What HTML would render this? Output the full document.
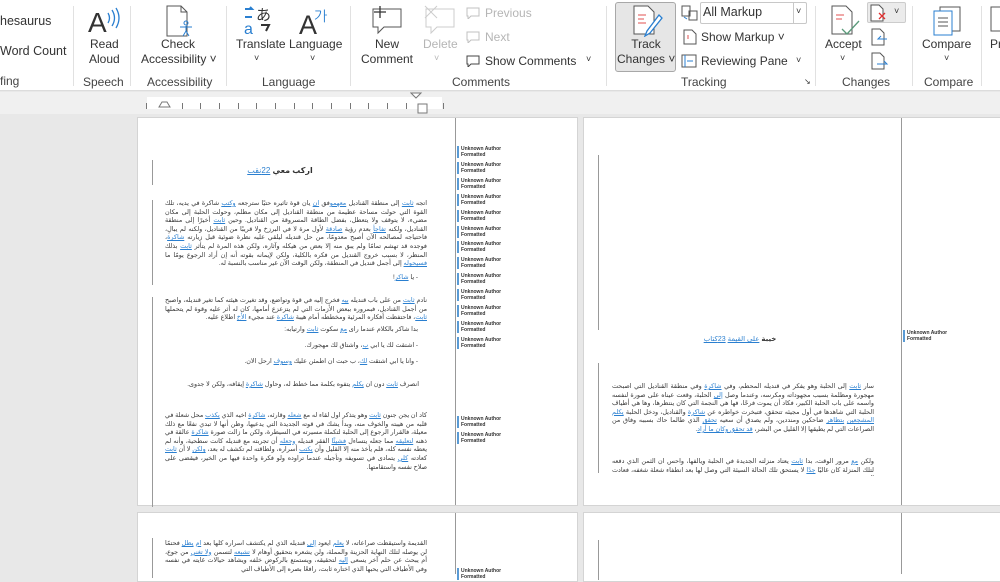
<!DOCTYPE html>
<html><head><meta charset="utf-8"><style>
*{margin:0;padding:0;box-sizing:border-box}
body{width:1000px;height:574px;overflow:hidden;background:#e8e8e8;font-family:"Segoe UI","Liberation Sans",sans-serif;position:relative;color:#333}
.a{position:absolute}
.rib{left:0;top:0;width:1000px;height:91px;background:#fff;border-bottom:1px solid #dcdcdc}
.lbl{position:absolute;font-size:12px;color:#333;white-space:nowrap}
.grp{position:absolute;top:88px;font-size:12px;color:#444}
.sep{position:absolute;top:6px;width:1px;height:80px;background:#e1e1e1}
.dis{color:#b5b5b5}
.page{position:absolute;background:#fff;border:1px solid #d4d4d4}
.ar{position:absolute;direction:rtl;text-align:justify;font-family:"Liberation Sans","DejaVu Sans",sans-serif;font-size:6.4px;line-height:8.6px;color:#3a3a3a;overflow:hidden}
.ar b{color:#2a7fd0;font-weight:normal;text-decoration:underline}
.cm{position:absolute;left:457px;font-size:5px;line-height:6px;font-weight:bold;color:#333;border-left:2px solid #5a9bd5;padding-left:2px;width:50px}
.bar{position:absolute;width:1px;background:#999}
.t{position:absolute;height:6px;width:1px;background:#777;top:103px}
</style></head><body>
<div class="a rib"></div>
<div class="lbl" style="left:0;top:14px;font-size:12.5px">hesaurus</div>
<div class="lbl" style="left:0;top:44px;font-size:12.5px">Word Count</div>
<div class="grp" style="left:0;top:74px">fing</div>
<div class="sep" style="left:73px"></div>
<svg class="a" style="left:86px;top:5px" width="34" height="30"><text x="2" y="27" font-size="28" font-family="Liberation Sans" fill="#333">A</text><path d="M22 8q3 5 0 10M26 5q5 8 0 16M30 3q6 10 0 20" stroke="#2a7fd0" fill="none" stroke-width="1.3"/></svg>
<div class="lbl" style="left:89px;top:37px;text-align:center;line-height:15px">Read<br>Aloud</div>
<div class="grp" style="left:83px;top:75px">Speech</div>
<div class="sep" style="left:130px"></div>
<svg class="a" style="left:165px;top:5px" width="30" height="32"><path d="M2 1h14l6 6v24H2z" fill="#fff" stroke="#555"/><path d="M16 1v6h6" fill="none" stroke="#555"/><circle cx="21" cy="18" r="2" fill="none" stroke="#2a7fd0"/><path d="M15 22h12M21 21v5l-3 5M21 26l3 5" stroke="#2a7fd0" fill="none"/></svg>
<div class="lbl" style="left:141px;top:37px;text-align:center;line-height:15px;width:74px">Check<br>Accessibility ˅</div>
<div class="grp" style="left:147px;top:75px">Accessibility</div>
<div class="sep" style="left:226px"></div>
<svg class="a" style="left:243px;top:5px" width="34" height="30"><text x="13" y="15" font-size="15" font-family="Noto Sans CJK JP" fill="#333">あ</text><text x="1" y="29" font-size="16" font-family="Liberation Sans" fill="#2a7fd0">a</text><path d="M2 4h7l-2-2M9 12H2" stroke="#2a7fd0" fill="none" stroke-width="2"/><path d="M18 20h8l-3 6" stroke="#333" fill="none" stroke-width="2"/></svg>
<div class="lbl" style="left:236px;top:37px">Translate</div>
<div class="lbl" style="left:254px;top:53px;font-size:9px">˅</div>
<svg class="a" style="left:297px;top:5px" width="34" height="30"><text x="2" y="29" font-size="27" font-family="Liberation Sans" fill="#333">A</text><text x="17" y="16" font-size="14" font-family="NanumGothic" fill="#2a7fd0">가</text></svg>
<div class="lbl" style="left:289px;top:37px">Language</div>
<div class="lbl" style="left:310px;top:53px;font-size:9px">˅</div>
<div class="grp" style="left:262px;top:75px">Language</div>
<div class="sep" style="left:350px"></div>
<svg class="a" style="left:370px;top:5px" width="34" height="30"><path d="M3 4h28v18H14l-6 6v-6H3z" fill="#fff" stroke="#555"/><path d="M10 1v12M4 7h12" stroke="#333" stroke-width="1.3"/></svg>
<div class="lbl" style="left:361px;top:37px;text-align:center;line-height:15px;width:52px">New<br>Comment</div>
<svg class="a" style="left:423px;top:5px" width="34" height="30"><path d="M3 4h28v18H14l-6 6v-6H3z" fill="#fff" stroke="#ccc"/><path d="M2 1l12 12M14 1L2 13" stroke="#ccc"/></svg>
<div class="lbl dis" style="left:423px;top:37px">Delete</div>
<div class="lbl dis" style="left:434px;top:53px;font-size:9px">˅</div>
<svg class="a" style="left:466px;top:7px" width="14" height="12"><path d="M1 1h12v8H5l-3 3v-3H1z" fill="none" stroke="#c0c0c0"/></svg>
<div class="lbl dis" style="left:485px;top:6px">Previous</div>
<svg class="a" style="left:466px;top:31px" width="14" height="12"><path d="M1 1h12v8H5l-3 3v-3H1z" fill="none" stroke="#c0c0c0"/></svg>
<div class="lbl dis" style="left:485px;top:30px">Next</div>
<svg class="a" style="left:466px;top:55px" width="14" height="12"><path d="M1 1h12v8H5l-3 3v-3H1z" fill="none" stroke="#444"/></svg>
<div class="lbl" style="left:485px;top:54px">Show Comments</div>
<div class="lbl" style="left:586px;top:54px;font-size:9px">˅</div>
<div class="grp" style="left:452px;top:75px">Comments</div>
<div class="sep" style="left:606px"></div>
<div class="a" style="left:615px;top:2px;width:61px;height:70px;background:#e6e6e6;border:1px solid #a8a8a8;border-radius:3px"></div>
<svg class="a" style="left:632px;top:5px" width="32" height="32"><path d="M2 1h14l6 6v22H2z" fill="#fff" stroke="#555"/><path d="M6 10h8M6 14h6M6 18h8" stroke="#e05050"/><path d="M27 10L15 26l-2 5 5-3 12-15z" fill="#fff" stroke="#2a7fd0" stroke-width="1.3"/></svg>
<div class="lbl" style="left:617px;top:37px;text-align:center;line-height:15px;width:58px">Track<br>Changes ˅</div>
<svg class="a" style="left:681px;top:5px" width="18" height="16"><path d="M1 1h8v10H1zM8 6h8v9H8z" fill="#fff" stroke="#555"/><path d="M3 12l3 2" stroke="#2a7fd0"/></svg>
<div class="a" style="left:700px;top:2px;width:107px;height:22px;border:1px solid #c8c8c8;border-radius:2px"></div>
<div class="a" style="left:793px;top:2px;width:1px;height:22px;background:#c8c8c8"></div>
<div class="lbl" style="left:703px;top:5px;font-size:12.5px">All Markup</div>
<div class="lbl" style="left:796px;top:6px;font-size:9px">˅</div>
<svg class="a" style="left:683px;top:29px" width="14" height="16"><path d="M1 1h8l4 4v10H1z" fill="#fff" stroke="#555"/><path d="M5 6v4" stroke="#e05050"/></svg>
<div class="lbl" style="left:701px;top:30px">Show Markup ˅</div>
<svg class="a" style="left:681px;top:54px" width="16" height="14"><rect x="1" y="1" width="14" height="12" fill="#fff" stroke="#555"/><path d="M4 1v12M6 7h6" stroke="#2a7fd0"/></svg>
<div class="lbl" style="left:701px;top:54px">Reviewing Pane</div>
<div class="lbl" style="left:796px;top:55px;font-size:9px">˅</div>
<div class="grp" style="left:681px;top:75px">Tracking</div>
<div class="lbl" style="left:804px;top:77px;font-size:8px">↘</div>
<div class="sep" style="left:815px"></div>
<svg class="a" style="left:830px;top:5px" width="32" height="32"><path d="M2 1h14l6 6v22H2z" fill="#fff" stroke="#555"/><path d="M6 10h8M6 14h6" stroke="#e05050"/><path d="M12 24l5 5 12-13" stroke="#5a9a7a" fill="none" stroke-width="1.3"/></svg>
<div class="lbl" style="left:825px;top:37px">Accept</div>
<div class="lbl" style="left:840px;top:53px;font-size:9px">˅</div>
<div class="a" style="left:867px;top:2px;width:39px;height:21px;background:#ebebeb;border:1px solid #ccc;border-radius:2px"></div>
<svg class="a" style="left:870px;top:4px" width="18" height="18"><path d="M1 1h8l4 4v12H1z" fill="#fff" stroke="#555"/><path d="M9 9l6 6M15 9l-6 6" stroke="#e03030" stroke-width="1.3"/></svg>
<div class="lbl" style="left:894px;top:6px;font-size:9px">˅</div>
<svg class="a" style="left:871px;top:28px" width="18" height="18"><path d="M1 1h8l4 4v12H1z" fill="#fff" stroke="#555"/><path d="M16 11H7l3-3" stroke="#2a7fd0" fill="none"/></svg>
<svg class="a" style="left:871px;top:52px" width="18" height="18"><path d="M1 1h8l4 4v12H1z" fill="#fff" stroke="#555"/><path d="M6 12h10l-3-3" stroke="#2a7fd0" fill="none"/></svg>
<div class="grp" style="left:842px;top:75px">Changes</div>
<div class="sep" style="left:912px"></div>
<svg class="a" style="left:932px;top:6px" width="32" height="30"><path d="M8 1h20v24H8z" fill="#fff" stroke="#555"/><path d="M2 5h18v24H2z" fill="#fff" stroke="#2a7fd0"/><path d="M6 12h10M6 16h10M6 20h10" stroke="#555"/></svg>
<div class="lbl" style="left:922px;top:37px">Compare</div>
<div class="lbl" style="left:944px;top:53px;font-size:9px">˅</div>
<div class="grp" style="left:924px;top:75px">Compare</div>
<div class="sep" style="left:981px"></div>
<svg class="a" style="left:989px;top:6px" width="11" height="26"><path d="M2 1h12v24H2z" fill="#fff" stroke="#555"/></svg>
<div class="lbl" style="left:990px;top:37px">Pr</div>
<div class="a" style="left:0;top:92px;width:1000px;height:22px;background:#f0f0f0"></div>
<div class="a" style="left:147px;top:97px;width:295px;height:12px;background:#fff"></div>
<div class="t" style="left:146px"></div><div class="t" style="left:182px"></div><div class="t" style="left:200px"></div><div class="t" style="left:219px"></div><div class="t" style="left:238px"></div><div class="t" style="left:256px"></div><div class="t" style="left:275px"></div><div class="t" style="left:294px"></div><div class="t" style="left:312px"></div><div class="t" style="left:331px"></div><div class="t" style="left:350px"></div><div class="t" style="left:368px"></div><div class="t" style="left:387px"></div><div class="t" style="left:406px"></div><div class="t" style="left:443px"></div>
<svg class="a" style="left:158px;top:98px" width="14" height="10"><path d="M1 9h11L9 4H4z" fill="#fff" stroke="#777"/></svg>
<svg class="a" style="left:410px;top:92px" width="22" height="22"><path d="M1 1h10L6 6z" fill="#fff" stroke="#777"/><rect x="8" y="12" width="9" height="9" fill="#fff" stroke="#777"/></svg>
<div class="page" style="left:137px;top:117px;width:441px;height:389px"></div>
<div class="a" style="left:455px;top:118px;width:1px;height:387px;background:#999"></div>
<div class="bar" style="left:152px;top:160px;height:25px"></div>
<div class="bar" style="left:152px;top:200px;height:85px"></div>
<div class="bar" style="left:152px;top:297px;height:210px"></div>
<div class="ar" style="left:230px;top:166px;width:100px;text-align:center;font-size:8px;font-weight:bold;color:#333;line-height:10px">ارکب معي <b>22نقب</b></div>
<div class="ar" style="left:165px;top:200px;width:262px;height:69px">اتجه <b>ثابت</b> إلى منطقة القناديل <b>معهمو</b>فق <b>أن</b> يأن قوة تأثيره حتيًا سترجعه <b>وكتب</b> شاكرة في يديه، تلك القوة التي حولت مساحة عظيمة من منطقة القناديل إلى مكان مظلم، وحولت الحلبة إلى مكان مضيء، لا يتوقف ولا يتعطل، بفضل الطاقة المسروقة من القناديل. وحين <b>ثابت</b> أخيرًا إلى منطقة القناديل، ولكنه <b>تفاجأ</b> بعدم رؤية <b>صادقة</b> لأول مرة لا في البرزخ ولا قريبًا من القناديل، ولكنه لم يبالِ، فاحتياجه لمصالحه الآن أصبح معدومًا، من حل قنديله ليلقي عليه نظرة ضوئية قبل زيارته <b>شاكرة</b>، فوجده قد تهشم تمامًا ولم يبق منه إلا بعض من هيكله وآثاره، ولكن هذه المرة لم يتأثر <b>ثابت</b> بذلك المنظر، لا بسبب خروج القنديل من فكره بالكلية، ولكن لإيمانه بقوته أنه إن أراد الرجوع يومًا ما <b>فسيحوله</b> إلى أجمل قنديل في المنطقة، ولكن الوقت الآن غير مناسب بالنسبة له.</div>
<div class="ar" style="left:300px;top:274px;width:118px;text-align:right">- يا <b>شاكر</b>!</div>
<div class="ar" style="left:165px;top:297px;width:262px;height:26px">نادم <b>ثابت</b> من على باب قنديله <b>بيه</b> فخرج إليه في قوة وتواضع، وقد تغيرت هيئته كما تغير قنديله، وأصبح من أجمل القناديل، فبمروره ببعض الأزمات التي لم يتزعزع أمامها، كان له أثر عليه وقوة لم يتحملها <b>ثابت</b>، فاحتفظت أفكاره المرئية ومخططه أمام هيبة <b>شاكرة</b> عند مجيء <b>الأخ</b> اطلاع عليه.</div>
<div class="ar" style="left:200px;top:326px;width:218px;text-align:right">بدأ شاكر بالكلام عندما رأى <b>مع</b> سكوت <b>ثابت</b> وارتيابه:</div>
<div class="ar" style="left:200px;top:342px;width:218px;text-align:right">- اشتقت لك يا أبي <b>ب</b>، واشتاق لك مهجورك.</div>
<div class="ar" style="left:200px;top:358px;width:218px;text-align:right">- وأنا يا أبي اشتقت <b>لك</b>، ب حبت أن أطمئن عليك <b>وسوف</b> أرحل الآن.</div>
<div class="ar" style="left:165px;top:381px;width:254px;text-align:right">انصرف <b>ثابت</b> دون أن <b>يكلم</b> يتفوه بكلمة مما خطط له، وحاول <b>شاكرة</b> إيقافه، ولكن لا جدوى.</div>
<div class="ar" style="left:165px;top:412px;width:262px;height:60px">كاد أن يجن جنون <b>ثابت</b> وهو يتذكر أول لقاء له مع <b>شعله</b> وقارئه، <b>شاكرة</b> أخيه الذي <b>يكذب</b> محل شعلة في قلبه من هيبته والخوف منه، وبدأ يشك في قوته الجديدة التي يدعيها، وظن أنها لا تبدي نفعًا مع ذلك معيلة، فالقرار الرجوع إلى الحلبة لتكملة مسيرته في السيطرة، ولكن ما زالت صورة <b>شاكرة</b> عالقة في ذهنه <b>لتعليقه</b> مما جعله يتساءل <b>فشيئًا</b> الفقر قنديله <b>وجعله</b> أن تجربته مع قنديله كانت سطحية، وأنه لم يعطه نفسه كله، فلم يأخذ منه إلا القليل وأن <b>يكتب</b> أسراره، ولطاقته لم تكشف له بعد، <b>ولكن</b> لا أن <b>ثابت</b> كعادته <b>كلي</b> يتمادى في تسويفه وتأجيله عندما تراوده ولو فكرة واحدة فيها من الخير، فيقضى على صلاح نفسه واستقامتها.</div>
<div class="cm" style="top:146px">Unknown Author<br>Formatted</div>
<div class="cm" style="top:162px">Unknown Author<br>Formatted</div>
<div class="cm" style="top:178px">Unknown Author<br>Formatted</div>
<div class="cm" style="top:194px">Unknown Author<br>Formatted</div>
<div class="cm" style="top:210px">Unknown Author<br>Formatted</div>
<div class="cm" style="top:226px">Unknown Author<br>Formatted</div>
<div class="cm" style="top:241px">Unknown Author<br>Formatted</div>
<div class="cm" style="top:257px">Unknown Author<br>Formatted</div>
<div class="cm" style="top:273px">Unknown Author<br>Formatted</div>
<div class="cm" style="top:289px">Unknown Author<br>Formatted</div>
<div class="cm" style="top:305px">Unknown Author<br>Formatted</div>
<div class="cm" style="top:321px">Unknown Author<br>Formatted</div>
<div class="cm" style="top:337px">Unknown Author<br>Formatted</div>
<div class="cm" style="top:416px">Unknown Author<br>Formatted</div>
<div class="cm" style="top:432px">Unknown Author<br>Formatted</div>
<div class="page" style="left:583px;top:117px;width:430px;height:389px"></div>
<div class="a" style="left:901px;top:118px;width:1px;height:387px;background:#999"></div>
<div class="bar" style="left:598px;top:155px;height:175px"></div>
<div class="bar" style="left:598px;top:363px;height:110px"></div>
<div class="ar" style="left:660px;top:336px;width:160px;text-align:center;font-size:7px;font-weight:bold;color:#333">خيبة <b>على القيمة</b> <b>23كتاب</b></div>
<div class="ar" style="left:612px;top:383px;width:262px;height:52px">سار <b>ثابت</b> إلى الحلبة وهو يفكر في قنديله المحطم، وفي <b>شاكرة</b> وفي منطقة القناديل التي أصبحت مهجورة ومظلمة بسبب مجهوداته ومكرسه، وعندما وصل <b>إلى</b> الحلبة، وقعت عيناه على صورة لنفسه واسمه على باب الحلبة الكبير، فكاد أن يموت فرحًا، فها هي النجمة التي كان ينتظرها، وها هي أطياف الحلبة التي شاهدها في أول مجيئه تتحقق، فتبخرت خواطره عن <b>شاكرة</b> والقناديل، ودخل الحلبة <b>يكلم المشجعين</b> <b>بتظاهر</b> ضاحكين ومنددين، ولم يصدق أن سعيه <b>تحقق</b> الذي طالما حاك بسببه وفاق من الصراعات التي لم يطيقها إلا القليل من البشر، <b>قد تحقق وكان ما أراد</b>.</div>
<div class="ar" style="left:612px;top:458px;width:262px;height:18px">ولكن <b>مع</b> مرور الوقت، بدأ <b>ثابت</b> يعتاد منزلته الجديدة في الحلبة ويألفها، وأحس أن الثمن الذي دفعه لتلك المنزلة كان غاليًا <b>جدًا</b> لا يستحق تلك الحالة السيئة التي وصل لها بعد انطفاء شعلة شغفه، فعادت إليه حيرته</div>
<div class="cm" style="left:903px;top:330px">Unknown Author<br>Formatted</div>
<div class="page" style="left:137px;top:512px;width:441px;height:70px"></div>
<div class="a" style="left:455px;top:513px;width:1px;height:61px;background:#999"></div>
<div class="bar" style="left:152px;top:538px;height:40px"></div>
<div class="ar" style="left:165px;top:540px;width:262px;height:34px">القديمة واستيقظت صراعاته، لا <b>يعلم</b> أيعود <b>إلى</b> قنديله الذي لم يكتشف أسراره كلها بعد <b>أم</b> <b>يظل</b> فحتمًا لن يوصله لتلك النهاية الحزينة والمملة، ولن يشعره بتحقيق أوهام لا <b>تشبعه</b> لتسمن <b>ولا تغني</b> من جوع، أم يبحث عن حلم آخر يسعى <b>إليه</b> لتحقيقه، ويستمتع بالركوض خلفه ويشاهد حيالات غايته في نفسه وفي الأطياف التي يحبها الذي اختاره ثابت، رافعًا بصره إلى الأطياف التي</div>
<div class="cm" style="top:568px">Unknown Author<br>Formatted</div>
<div class="page" style="left:583px;top:512px;width:430px;height:70px"></div>
<div class="a" style="left:901px;top:513px;width:1px;height:61px;background:#999"></div>
<div class="bar" style="left:598px;top:540px;height:40px"></div>
</body></html>
